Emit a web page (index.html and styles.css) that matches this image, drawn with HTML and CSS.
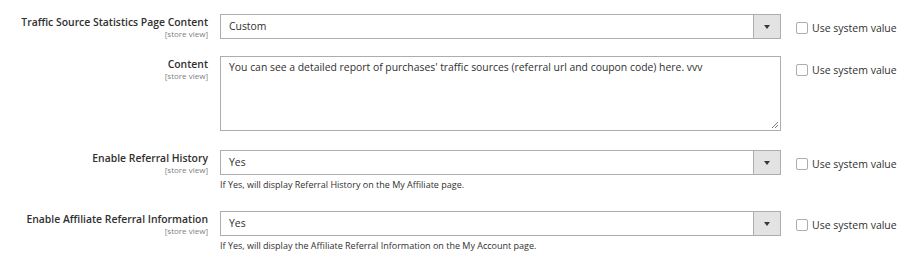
FILE: index.html
```html
<!DOCTYPE html>
<html>
<head>
<meta charset="utf-8">
<link rel="stylesheet" href="styles.css">
</head>
<body>
<div class="form">
  <div class="row row-first">
    <div class="label"><span class="label-text">Traffic Source Statistics Page Content</span><span class="scope">[store view]</span></div>
    <div class="control">
      <div class="select"><span class="select-value">Custom</span><span class="select-arrow"><span class="tri"></span></span></div>
    </div>
    <label class="sys"><span class="box"></span><span class="sys-text">Use system value</span></label>
  </div>
  <div class="row row-text">
    <div class="label"><span class="label-text">Content</span><span class="scope">[store view]</span></div>
    <div class="control">
      <div class="textarea">You can see a detailed report of purchases' traffic sources (referral url and coupon code) here. vvv<svg class="grip" width="9" height="9" viewBox="0 0 9 9"><path d="M8 2 L2 8 M8 5 L5 8" stroke="#7a7a7a" stroke-width="1"/></svg></div>
    </div>
    <label class="sys"><span class="box"></span><span class="sys-text">Use system value</span></label>
  </div>
  <div class="row row-hist">
    <div class="label"><span class="label-text">Enable Referral History</span><span class="scope">[store view]</span></div>
    <div class="control">
      <div class="select"><span class="select-value">Yes</span><span class="select-arrow"><span class="tri"></span></span></div>
      <p class="note">If Yes, will display Referral History on the My Affiliate page.</p>
    </div>
    <label class="sys"><span class="box"></span><span class="sys-text">Use system value</span></label>
  </div>
  <div class="row row-info">
    <div class="label"><span class="label-text">Enable Affiliate Referral Information</span><span class="scope">[store view]</span></div>
    <div class="control">
      <div class="select"><span class="select-value">Yes</span><span class="select-arrow"><span class="tri"></span></span></div>
      <p class="note">If Yes, will display the Affiliate Referral Information on the My Account page.</p>
    </div>
    <label class="sys"><span class="box"></span><span class="sys-text">Use system value</span></label>
  </div>
</div>
</body>
</html>
```

FILE: styles.css
```css
* { box-sizing: border-box; }
html, body { margin: 0; padding: 0; background: #fff; }
body {
  font-family: "Open Sans", "Liberation Sans", sans-serif;
  color: #303030;
  width: 910px;
  height: 263px;
  overflow: hidden;
}
.form { display: flex; flex-direction: column; padding-top: 14px; }
.row { display: flex; align-items: flex-start; }
.row-text { margin-top: 17px; }
.row-hist { margin-top: 19px; }
.row-info { margin-top: 20px; }
.label {
  width: 209px;
  padding-right: 1px;
  margin-right: 11px;
  display: flex;
  flex-direction: column;
  align-items: flex-end;
  text-align: right;
  padding-top: 1px;
}
.label-text {
  font-size: 10.4px;
  font-weight: 600;
  line-height: 14px;
  color: #303030;
  white-space: nowrap;
}
.scope {
  font-size: 8px;
  line-height: 10px;
  color: #808080;
}
.control { width: 561px; display: flex; flex-direction: column; }
.select {
  height: 25px;
  border: 1px solid #adadad;
  display: flex;
  align-items: stretch;
  background: #fff;
}
.select-value {
  flex: 1;
  padding-left: 8px;
  font-size: 10.4px;
  line-height: 23px;
  color: #303030;
}
.select-arrow {
  width: 27px;
  background: #e3e3e3;
  border-left: 1px solid #adadad;
  display: flex;
  align-items: center;
  justify-content: center;
}
.tri {
  width: 0; height: 0;
  border-left: 3px solid transparent;
  border-right: 3px solid transparent;
  border-top: 4px solid #41362f;
}
.textarea {
  position: relative;
  height: 75px;
  border: 1px solid #adadad;
  padding: 3px 8px;
  font-size: 10.4px;
  line-height: 14px;
  color: #303030;
}
.grip { position: absolute; right: 1px; bottom: 1px; }
.note {
  margin: 3px 0 0 0;
  font-size: 9px;
  line-height: 13px;
  color: #303030;
}
.sys {
  display: flex;
  align-items: center;
  margin-left: 15px;
  margin-top: 7px;
}
.box {
  width: 12px; height: 12px;
  border: 1px solid #adadad;
  border-radius: 2px;
  background: #fff;
  margin-right: 4px;
}
.sys-text { font-size: 10.5px; line-height: 14px; color: #303030; white-space: nowrap; }
```
